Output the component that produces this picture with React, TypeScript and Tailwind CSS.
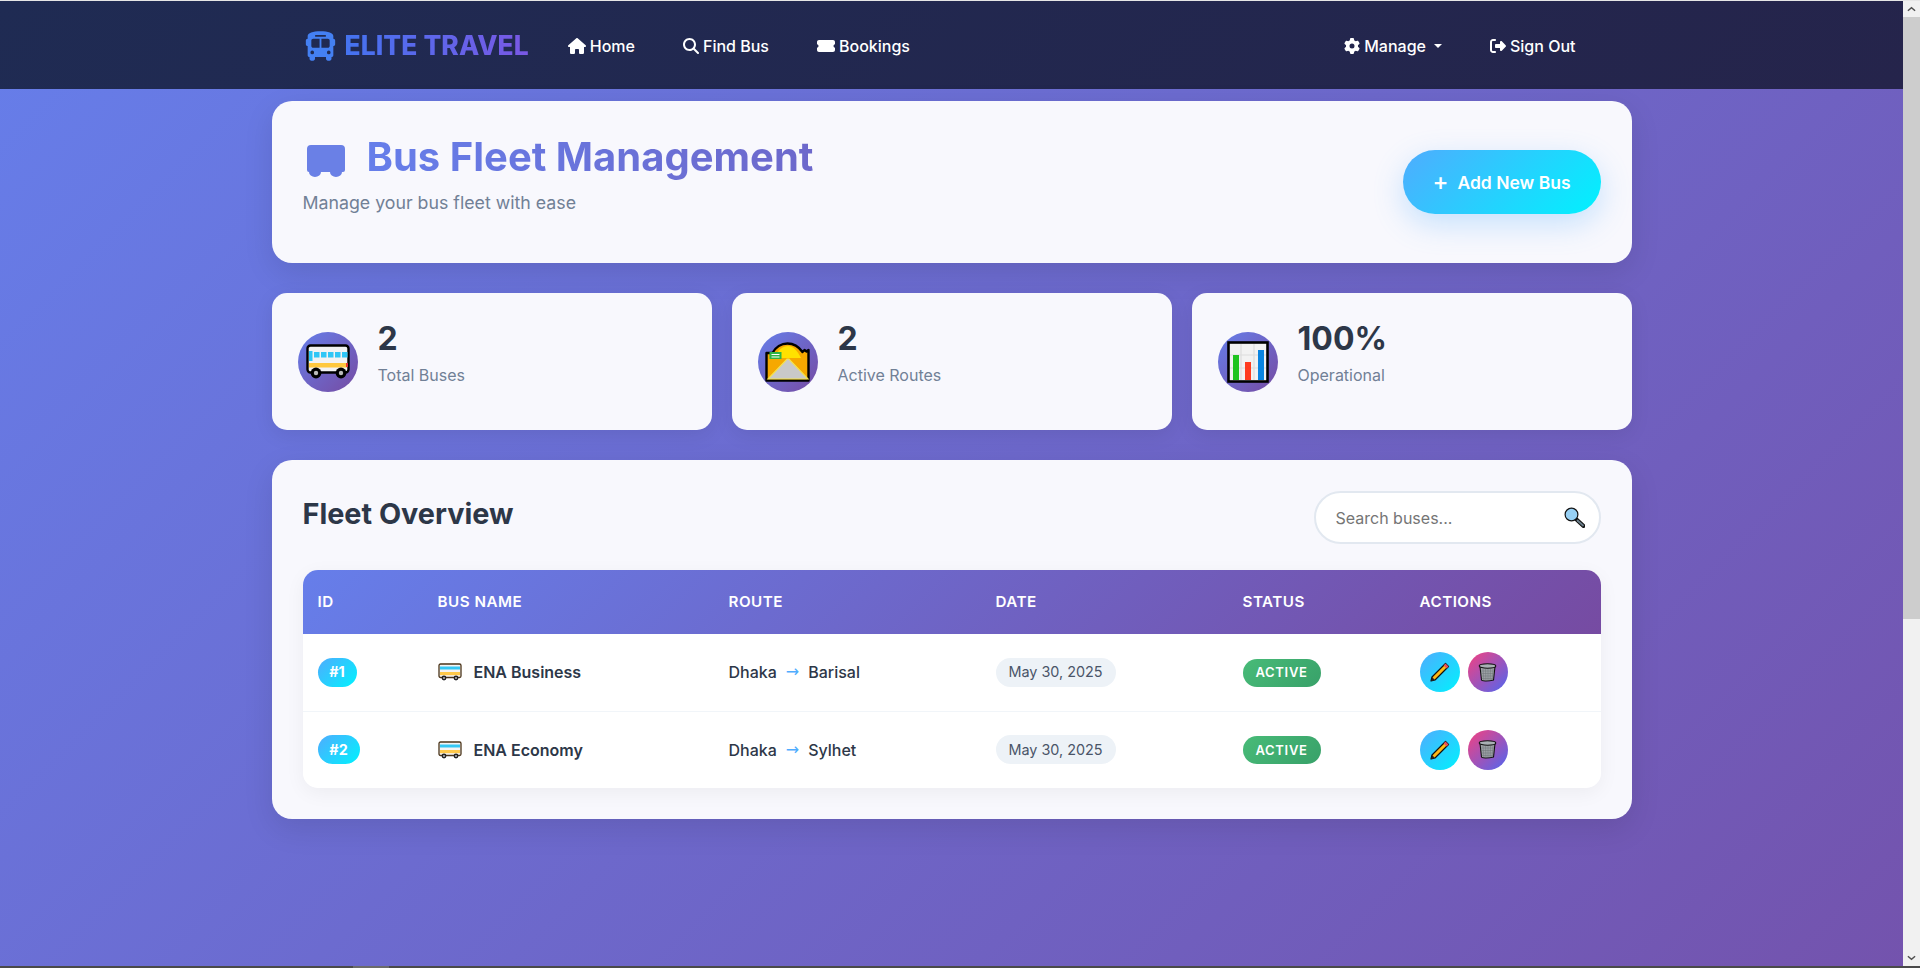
import React from "react";
import { FaBus, FaGear, FaHouse, FaMagnifyingGlass, FaRightFromBracket, FaTicketSimple } from "react-icons/fa6";

type Bus = { id: string; name: string; to: string; idWidth: string };

const buses: Bus[] = [
  { id: "#1", name: "ENA Business", to: "Barisal", idWidth: "w-[39px]" },
  { id: "#2", name: "ENA Economy", to: "Sylhet", idWidth: "w-[42px]" },
];

function BusEmoji() {
  return (
    <svg viewBox="0 0 44 36" className="w-11 h-9">
      <rect x="1.5" y="1.5" width="41" height="27" rx="3" fill="#f2f2f2" stroke="#000" strokeWidth="2.4" />
      <rect x="3" y="7" width="3.5" height="10" fill="#2fc6f6" />
      {[8, 15, 22, 29, 36].map((x) => (
        <rect key={x} x={x} y="8" width="5.5" height="5.5" fill="#2fc6f6" />
      ))}
      <rect x="3" y="19" width="38" height="4.5" fill="#ffc83d" />
      <rect x="40" y="19" width="2" height="4" fill="#e53935" />
      <circle cx="10" cy="29" r="5.4" fill="#000" />
      <circle cx="10" cy="29" r="2.2" fill="#bbb" />
      <circle cx="35" cy="29" r="5.4" fill="#000" />
      <circle cx="35" cy="29" r="2.2" fill="#bbb" />
    </svg>
  );
}

function SmallBusEmoji() {
  return (
    <svg viewBox="0 0 24 18" className="w-6 h-[18px]">
      <rect x="1" y="1" width="22" height="13.5" rx="1.5" fill="#f4f4f4" stroke="#4a3318" strokeWidth="1.3" />
      <rect x="2" y="3.5" width="20" height="3" fill="#35c8f5" />
      <rect x="2" y="9" width="20" height="3.2" fill="#ffc94a" />
      <circle cx="6" cy="15" r="2.4" fill="#222" />
      <circle cx="6" cy="15" r="1" fill="#bbb" />
      <circle cx="18" cy="15" r="2.4" fill="#222" />
      <circle cx="18" cy="15" r="1" fill="#bbb" />
    </svg>
  );
}

function RoadEmoji() {
  return (
    <svg viewBox="0 0 45 40" className="w-[45px] h-10">
      <path d="M1.5 38.5V11h6c3-6 9-9.5 15-9.5S34 5 37.5 10l2-2 2 1.5 2-1.5v30.5z" fill="#f6a800" stroke="#000" strokeWidth="2.4" strokeLinejoin="round" />
      <path d="M10 16c2-8 8-12 13-12s9 4 13 12z" fill="#ffe100" />
      <path d="M3 37 22 17h2l19 20z" fill="#c9c9c9" stroke="#f5e34a" strokeWidth="1.2" />
      <rect x="4.5" y="10" width="12" height="7" fill="#2fb344" />
      <rect x="6.5" y="12" width="8" height="1" fill="#fff" />
      <rect x="6.5" y="14.5" width="8" height="1" fill="#fff" />
    </svg>
  );
}

function ChartEmoji() {
  return (
    <svg viewBox="0 0 42 42" className="w-[42px] h-[42px]">
      <rect x="1.5" y="1.5" width="39" height="39" fill="#f2f2f2" stroke="#000" strokeWidth="2.6" />
      <path d="M14 3v36M27 3v36M3 14h36M3 27h36" stroke="#dcdcdc" strokeWidth="1.2" />
      <rect x="6" y="14" width="6" height="25" fill="#1fc41f" />
      <rect x="18" y="21" width="6" height="18" fill="#ff3b1f" />
      <rect x="31" y="9" width="6" height="30" fill="#0a84e0" />
    </svg>
  );
}

function PencilEmoji() {
  return (
    <svg viewBox="0 0 20 20" className="w-5 h-5">
      <path d="M15.5 1.5 18.5 4.5 5 18 1 19l1-4z" fill="#fdb813" stroke="#111" strokeWidth="1.2" strokeLinejoin="round" />
      <path d="M15.5 1.5 18.5 4.5 16.6 6.4 13.6 3.4z" fill="#e8505b" />
      <path d="M2 15l3 3-4 1z" fill="#222" />
    </svg>
  );
}

function TrashEmoji() {
  return (
    <svg viewBox="0 0 19 19" className="w-[19px] h-[19px]">
      <path d="M2 3.5 3.5 17c.1 1 6 1.6 12 0L17 3.5z" fill="#9ca1a5" stroke="#111" strokeWidth="1.1" />
      <path d="M5 6l.8 11M7.5 6l.4 11.5M10 6v11.5M12.5 6l-.4 11.5M15 6l-.8 11M3 8h13M3.4 10.5h12.2M3.6 13h11.8M3.8 15.5h11.4" stroke="#6f7579" strokeWidth="0.5" />
      <ellipse cx="9.5" cy="3" rx="8.3" ry="2.2" fill="#a9b0b4" stroke="#111" strokeWidth="1.1" />
    </svg>
  );
}

function SearchEmoji() {
  return (
    <svg viewBox="0 0 21 21" className="w-[21px] h-[21px]">
      <path d="M12.5 12.5 19.5 19" stroke="#111" strokeWidth="4" strokeLinecap="round" />
      <path d="M13.5 13.5 19 18.5" stroke="#6b7f8c" strokeWidth="1.8" strokeLinecap="round" />
      <circle cx="7.5" cy="7.5" r="6.4" fill="#97d0f4" stroke="#111" strokeWidth="1.2" />
    </svg>
  );
}

function StatCard({ value, label, icon }: { value: string; label: string; icon: React.ReactNode }) {
  return (
    <div className="flex items-center gap-4 h-[137px] px-[26px] rounded-[15px] bg-[#f8f8fd] shadow-[0_5px_20px_rgba(0,0,0,0.08)]">
      <div className="w-[60px] h-[60px] rounded-full flex items-center justify-center shrink-0 bg-[linear-gradient(135deg,#667eea,#764ba2)]">
        {icon}
      </div>
      <div className="pl-1 pb-4">
        <div className="text-[32px] leading-[38px] font-bold text-[#2d3748]">{value}</div>
        <div className="mt-[5px] text-[16px] leading-6 text-[#718096]">{label}</div>
      </div>
    </div>
  );
}

function NavLink({ icon, label }: { icon: React.ReactNode; label: string }) {
  return (
    <a className="flex items-center gap-1 px-6 text-white text-[16px] font-medium">
      {icon}
      {label}
    </a>
  );
}

function Scrollbar() {
  return (
    <div className="w-[17px] shrink-0 flex flex-col bg-[#f1f1f1]">
      <div className="h-4 flex items-center justify-center">
        <svg viewBox="0 0 10 6" className="w-[9px] h-[6px]">
          <path d="M1 5 5 1.5 9 5" fill="none" stroke="#505050" strokeWidth="1.6" />
        </svg>
      </div>
      <div className="h-[602px] bg-[#cdcdcd]" />
      <div className="flex-1" />
      <div className="h-4 flex items-center justify-center">
        <svg viewBox="0 0 10 6" className="w-[9px] h-[6px]">
          <path d="M1 1 5 4.5 9 1" fill="none" stroke="#505050" strokeWidth="1.6" />
        </svg>
      </div>
    </div>
  );
}

export default function App() {
  return (
    <div className="h-[968px] flex flex-col overflow-hidden font-['Inter',sans-serif]">
      <div className="h-px bg-[#e6e6e6]" />
      <div className="flex-1 flex min-h-0">
        <div className="flex-1 min-w-0 bg-[linear-gradient(135deg,#667eea_0%,#764ba2_100%)] bg-[length:1903px_1500px]">
          {/* navbar */}
          <nav className="h-[88px] bg-[linear-gradient(135deg,#1f2b53,#25244b)]">
            <div className="w-[1320px] mx-auto px-3 pt-0.5 h-full flex items-center">
              <div className="flex items-center gap-2 mr-[15px]">
                <FaBus className="w-[33px] h-[30px] text-[#4480f3]" />
                <span className="text-[26.4px] font-extrabold tracking-[0.1px] bg-[linear-gradient(90deg,#4473f0,#7a58e4)] bg-clip-text text-transparent">
                  ELITE TRAVEL
                </span>
              </div>
              <NavLink icon={<FaHouse className="w-[18px] h-4" />} label="Home" />
              <NavLink icon={<FaMagnifyingGlass className="w-4 h-4" />} label="Find Bus" />
              <NavLink icon={<FaTicketSimple className="w-[18px] h-4" />} label="Bookings" />
              <div className="ml-auto flex items-center">
                <a className="flex items-center gap-1 px-6 text-white text-[16px] font-medium">
                  <FaGear className="w-4 h-4" />
                  Manage
                  <span className="ml-1 w-0 h-0 border-x-[4.5px] border-x-transparent border-t-[4.5px] border-t-white" />
                </a>
                <NavLink icon={<FaRightFromBracket className="w-4 h-4" />} label="Sign Out" />
              </div>
            </div>
          </nav>

          <main className="w-[1360px] mx-auto pt-3">
            {/* page header */}
            <section className="h-[162px] px-[31px] pt-[30px] flex rounded-[20px] bg-[#f8f8fd] shadow-[0_10px_30px_rgba(0,0,0,0.1)]">
              <div className="flex-1">
                <div className="flex items-center">
                  <svg viewBox="0 0 40 32" className="w-10 h-8 ml-[3.5px] mr-[20.5px] mt-[8px]">
                    <path d="M5 0h30a4 4 0 0 1 4 4v21a2 2 0 0 1-2 2h-1a6 5 0 0 1-12 0H15a6 5 0 0 1-12 0a2 2 0 0 1-2-2V4a4 4 0 0 1 4-4z" fill="#6a80e6" />
                  </svg>
                  <h1 className="flex-1 text-[40px] leading-[52px] font-bold bg-[linear-gradient(90deg,#667eea,#764ba2)] bg-clip-text text-transparent">
                    Bus Fleet Management
                  </h1>
                </div>
                <p className="mt-[6px] text-[17.76px] leading-7 text-[#718096]">Manage your bus fleet with ease</p>
              </div>
              <a className="mt-[19px] w-[198px] h-16 pt-0.5 rounded-full flex items-center justify-center gap-[9px] text-white text-[17.5px] font-semibold bg-[linear-gradient(135deg,#4facfe,#00f2fe)] shadow-[0_10px_30px_rgba(79,172,254,0.3)]">
                <span className="text-[24px] leading-none font-medium -mt-0.5">+</span>
                Add New Bus
              </a>
            </section>

            {/* stats */}
            <section className="mt-[30px] grid grid-cols-3 gap-5">
              <StatCard value="2" label="Total Buses" icon={<BusEmoji />} />
              <StatCard value="2" label="Active Routes" icon={<RoadEmoji />} />
              <StatCard value="100%" label="Operational" icon={<ChartEmoji />} />
            </section>

            {/* fleet table */}
            <section className="mt-[30px] p-[31px] rounded-[20px] bg-[#f8f8fd] shadow-[0_10px_30px_rgba(0,0,0,0.1)]">
              <div className="flex items-start justify-between mb-[26px]">
                <h2 className="text-[28.8px] leading-[46px] font-bold text-[#2d3748]">Fleet Overview</h2>
                <div className="relative w-[287px] h-[53px]">
                  <input
                    placeholder="Search buses..."
                    className="w-full h-full pl-5 pr-12 rounded-full border-2 border-[#e2e8f0] bg-white text-[16px] outline-none placeholder:text-[#757575]"
                  />
                  <span className="absolute right-4 top-4 flex">
                    <SearchEmoji />
                  </span>
                </div>
              </div>

              <div className="rounded-[15px] overflow-hidden shadow-[0_5px_20px_rgba(0,0,0,0.05)]">
                <table className="w-full table-fixed border-collapse bg-white">
                  <thead className="bg-[linear-gradient(135deg,#667eea,#764ba2)]">
                    <tr className="h-[64px] text-left text-white text-[15.2px] font-semibold uppercase tracking-[0.5px]">
                      <th className="w-[120px] px-[15px] font-semibold">ID</th>
                      <th className="w-[291px] px-[15px] font-semibold">Bus Name</th>
                      <th className="w-[267px] px-[15px] font-semibold">Route</th>
                      <th className="w-[247px] px-[15px] font-semibold">Date</th>
                      <th className="w-[177px] px-[15px] font-semibold">Status</th>
                      <th className="px-[15px] font-semibold">Actions</th>
                    </tr>
                  </thead>
                  <tbody>
                    {buses.map((bus, i) => (
                      <tr key={bus.id} className={i === 0 ? "h-[77px] border-b border-[#f1f5f9]" : "h-[77px]"}>
                        <td className="px-[15px]">
                          <span className={`${bus.idWidth} h-[29px] rounded-[20px] flex items-center justify-center text-white text-[14.4px] font-bold bg-[linear-gradient(135deg,#4facfe,#00f2fe)]`}>
                            {bus.id}
                          </span>
                        </td>
                        <td className="px-[15px]">
                          <div className="flex items-center gap-3 text-[16px] font-semibold text-[#2d3748]">
                            <SmallBusEmoji />
                            {bus.name}
                          </div>
                        </td>
                        <td className="px-[15px]">
                          <div className="flex items-center gap-[9px] text-[16px] font-medium text-[#2d3748]">
                            Dhaka
                            <span className="text-[#4facfe] font-['DejaVu_Sans',sans-serif]">→</span>
                            {bus.to}
                          </div>
                        </td>
                        <td className="px-[15px]">
                          <span className="w-[120px] h-[29px] rounded-[15px] flex items-center justify-center bg-[#edf2f7] text-[#4a5568] text-[14.4px]">
                            May 30, 2025
                          </span>
                        </td>
                        <td className="px-[15px]">
                          <span className="mt-px w-[78px] h-[28px] rounded-[20px] flex items-center justify-center text-white text-[13px] font-semibold tracking-[0.7px] bg-[linear-gradient(135deg,#48bb78,#38a169)]">
                            ACTIVE
                          </span>
                        </td>
                        <td className="px-[15px]">
                          <div className="flex gap-2">
                            <button className="w-10 h-10 rounded-full flex items-center justify-center bg-[linear-gradient(135deg,#4facfe,#00f2fe)]">
                              <PencilEmoji />
                            </button>
                            <button className="w-10 h-10 rounded-full flex items-center justify-center bg-[linear-gradient(135deg,#f5407f,#4f66f0)]">
                              <TrashEmoji />
                            </button>
                          </div>
                        </td>
                      </tr>
                    ))}
                  </tbody>
                </table>
              </div>
            </section>
          </main>
        </div>
        <Scrollbar />
      </div>
      <div className="h-0.5 bg-[#4a4a4a] flex">
        <div className="ml-[353px] w-9 bg-[#6b6b6b]" />
      </div>
    </div>
  );
}
